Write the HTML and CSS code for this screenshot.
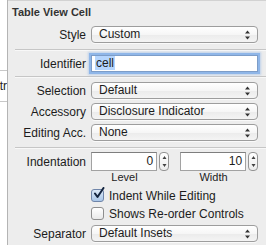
FILE: index.html
```html
<!DOCTYPE html>
<html lang="en">
<head>
	<meta charset="UTF-8">
	<title>Table View Cell</title>
	<link rel="stylesheet" href="styles.css">
</head>
<body>
	<div class="strip">
		<div class="strip-top"></div>
		<div class="strip-cell"><span>Attr</span></div>
	</div>
	<div class="panel">
		<div class="title">Table View Cell</div>

		<div class="row r-style">
			<label>Style</label>
			<div class="popup">Custom<svg class="arrows" width="7" height="10" viewBox="0 0 7 10"><path d="M3.5 0.5 L6 3.5 H1 Z M3.5 9.5 L6 6.5 H1 Z" fill="#333"/></svg></div>
		</div>
		<div class="sep"></div>

		<div class="row r-ident">
			<label>Identifier</label>
			<div class="field focus"><span class="sel">cell</span></div>
		</div>
		<div class="sep s2"></div>

		<div class="row r-pop">
			<label>Selection</label>
			<div class="popup">Default<svg class="arrows" width="7" height="10" viewBox="0 0 7 10"><path d="M3.5 0.5 L6 3.5 H1 Z M3.5 9.5 L6 6.5 H1 Z" fill="#333"/></svg></div>
		</div>
		<div class="row r-pop">
			<label>Accessory</label>
			<div class="popup">Disclosure Indicator<svg class="arrows" width="7" height="10" viewBox="0 0 7 10"><path d="M3.5 0.5 L6 3.5 H1 Z M3.5 9.5 L6 6.5 H1 Z" fill="#333"/></svg></div>
		</div>
		<div class="row r-pop">
			<label>Editing Acc.</label>
			<div class="popup">None<svg class="arrows" width="7" height="10" viewBox="0 0 7 10"><path d="M3.5 0.5 L6 3.5 H1 Z M3.5 9.5 L6 6.5 H1 Z" fill="#333"/></svg></div>
		</div>
		<div class="sep s3"></div>

		<div class="row r-indent">
			<label>Indentation</label>
			<div class="pair">
				<div class="num">0</div>
				<div class="stepper"><svg width="9" height="19" viewBox="0 0 9 19"><path d="M4.5 4 L6.5 7 H2.5 Z M4.5 15 L6.5 12 H2.5 Z" fill="#444"/></svg></div>
				<div class="num n2">10</div>
				<div class="stepper"><svg width="9" height="19" viewBox="0 0 9 19"><path d="M4.5 4 L6.5 7 H2.5 Z M4.5 15 L6.5 12 H2.5 Z" fill="#444"/></svg></div>
			</div>
		</div>
		<div class="row r-sub">
			<span></span>
			<div class="pair">
				<span class="sub">Level</span>
				<span class="sub s-w">Width</span>
			</div>
		</div>

		<div class="row r-check">
			<span></span>
			<div class="check-line"><span class="box on"><svg width="14" height="14" viewBox="0 0 14 14"><path d="M3 6.5 L5.5 10 L11.5 1" fill="none" stroke="#13243f" stroke-width="2" stroke-linecap="round" stroke-linejoin="round"/></svg></span>Indent While Editing</div>
		</div>
		<div class="row r-check c2">
			<span></span>
			<div class="check-line"><span class="box"></span>Shows Re-order Controls</div>
		</div>

		<div class="row r-sepr">
			<label>Separator</label>
			<div class="popup">Default Insets<svg class="arrows" width="7" height="10" viewBox="0 0 7 10"><path d="M3.5 0.5 L6 3.5 H1 Z M3.5 9.5 L6 6.5 H1 Z" fill="#333"/></svg></div>
		</div>
	</div>
</body>
</html>
```

FILE: styles.css
```css
html, body { margin: 0; height: 100%; }
body { display: flex; overflow: hidden; background: #ededed; font-family: "Liberation Sans", Arial, sans-serif; font-size: 12px; color: #1c1c1c; }

.strip { width: 7px; flex: none; background: #fff; border-right: 1px solid #b4b4b4; }
.strip-top { height: 70px; border-bottom: 1px solid #c8c8c8; }
.strip-cell { height: 30px; border-bottom: 1px solid #c8c8c8; display: flex; justify-content: flex-end; align-items: center; overflow: hidden; white-space: nowrap; color: #222; }

.panel { flex: 1; padding: 0 0 0 4px; border-top: 1px solid #d2d2d2; }
.title { margin-top: 5px; height: 12px; line-height: 12px; font-size: 11px; font-weight: bold; color: #333; }

.row { display: grid; grid-template-columns: 74px 167px; column-gap: 5px; align-items: center; }
.row label { text-align: right; white-space: nowrap; }
.r-style { margin-top: 8px; }
.r-ident { margin-top: 4px; }
.r-pop { margin-top: 4px; }
.r-indent { margin-top: 3px; }
.r-sub { margin-top: 1px; }
.r-check { margin-top: 6px; }
.r-check.c2 { margin-top: 5px; }
.r-sepr { margin-top: 5px; }

.sep { margin: 6px 0 0 3px; height: 1px; background: #c6c6c6; border-bottom: 1px solid #f8f8f8; }
.sep.s2 { margin-top: 4px; }
.sep.s3 { margin-top: 6px; }

.popup { height: 15px; line-height: 15px; border: 1px solid #9d9d9d; border-radius: 4px; padding-left: 7px; display: flex; align-items: center; justify-content: space-between; background: linear-gradient(#ffffff, #f6f6f6 50%, #ebebeb 51%, #f4f4f4); box-shadow: 0 1px 0 rgba(255,255,255,0.7); }
.arrows { margin-right: 6px; }

.field { height: 15px; line-height: 15px; background: #fff; border: 1px solid #7d9dc8; padding-left: 3px; box-shadow: 0 0 0 2px #8fb6e8, 0 0 2px 3px rgba(143,182,232,0.5); }
.sel { background: #b5d5fd; padding: 0 1px; }

.pair { display: flex; align-items: center; }
.num { box-sizing: border-box; width: 67px; height: 19px; line-height: 17px; background: #fff; border: 1px solid #a2a2a2; border-top-color: #7e7e7e; text-align: right; padding-right: 3px; }
.num.n2 { margin-left: 11px; }
.stepper { box-sizing: border-box; width: 10px; height: 19px; margin-left: 2px; border: 1px solid #949494; border-radius: 4px; background: linear-gradient(#fff, #ececec); display: flex; justify-content: center; align-items: center; overflow: hidden; }
.stepper svg { flex: none; }

.sub { width: 67px; text-align: center; font-size: 11px; line-height: 11px; color: #222; }
.sub.s-w { margin-left: 22px; }

.check-line { display: flex; align-items: center; gap: 5px; height: 13px; white-space: nowrap; }
.box { position: relative; box-sizing: border-box; width: 13px; height: 13px; border: 1px solid #8e8e8e; border-radius: 3px; background: linear-gradient(#ffffff, #e9e9e9); flex: none; }
.box.on { border-color: #6f85a9; background: linear-gradient(#dbe8f7, #a9c6e8); }
.box svg { position: absolute; left: 0; top: -3px; }
```
